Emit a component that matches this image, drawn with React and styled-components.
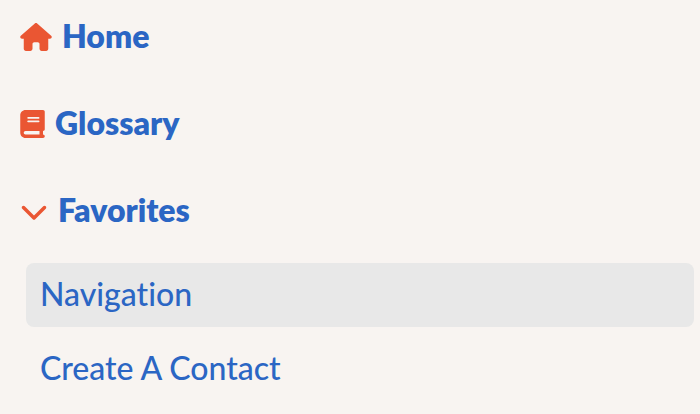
import React from "react";
import styled, { createGlobalStyle } from "styled-components";
import { FaHouse, FaBook, FaChevronDown } from "react-icons/fa6";

const GlobalStyle = createGlobalStyle`
  * { box-sizing: border-box; }
  body {
    margin: 0;
    background: #f8f4f1;
    font-family: Lato, sans-serif;
    font-variant-ligatures: none;
  }
`;

const Sidebar = styled.nav`
  min-height: 100vh;
  padding: 8px 6px 8px 20px;
  color: #2b66c4;
`;

const TopList = styled.ul`
  display: flex;
  flex-direction: column;
  gap: 29px;
  list-style: none;
  margin: 0;
  padding: 0;
`;

const TopItem = styled.a`
  display: flex;
  align-items: center;
  gap: 10px;
  height: 58px;
  color: inherit;
  font-size: 32px;
  font-weight: 800;
  line-height: 40px;
  text-decoration: none;

  svg {
    flex: none;
    width: ${(p) => p.$iconWidth}px;
    height: 28px;
    color: #ea5633;
  }
`;

const Label = styled.span`
  padding-bottom: 2px;
`;

const FavoriteList = styled.ul`
  display: flex;
  flex-direction: column;
  gap: 10px;
  list-style: none;
  margin: 23px 0 0;
  padding: 0 0 0 6px;
`;

const FavoriteLink = styled.a`
  display: block;
  padding: 11px 14px 13px;
  border-radius: 8px;
  background: ${(p) => (p.$active ? "#e8e8e8" : "transparent")};
  color: inherit;
  font-size: 32px;
  font-weight: 500;
  line-height: 40px;
  text-decoration: none;
`;

export default function App() {
  return (
    <>
      <GlobalStyle />
      <Sidebar>
        <TopList>
          <li><TopItem href="#home" $iconWidth={32}><FaHouse /><Label>Home</Label></TopItem></li>
          <li><TopItem href="#glossary" $iconWidth={25}><FaBook /><Label>Glossary</Label></TopItem></li>
          <li>
            <TopItem href="#favorites" $iconWidth={28}><FaChevronDown /><Label>Favorites</Label></TopItem>
            <FavoriteList>
              <li><FavoriteLink href="#navigation" $active>Navigation</FavoriteLink></li>
              <li><FavoriteLink href="#create">Create A Contact</FavoriteLink></li>
            </FavoriteList>
          </li>
        </TopList>
      </Sidebar>
    </>
  );
}
